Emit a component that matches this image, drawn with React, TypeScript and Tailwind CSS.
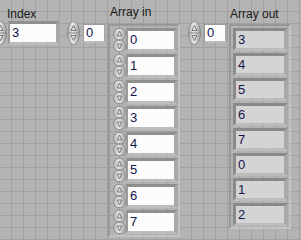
import React from 'react';

const arrayIn = [0, 1, 2, 3, 4, 5, 6, 7];
const arrayOut = [3, 4, 5, 6, 7, 0, 1, 2];

// oval up/down spinner used by the index displays and the Index control
const OvalSpinner: React.FC = () => (
  <svg width="13" height="24" viewBox="0 0 13 24" className="shrink-0">
    <defs>
      <linearGradient id="ov" x1="0" x2="1" y1="0" y2="0">
        <stop offset="0" stopColor="#a9a9a9" />
        <stop offset="0.45" stopColor="#ececec" />
        <stop offset="1" stopColor="#9c9c9c" />
      </linearGradient>
    </defs>
    <ellipse cx="6.5" cy="12" rx="6" ry="11.5" fill="url(#ov)" stroke="#8a8a8a" />
    <line x1="1" y1="12" x2="12" y2="12" stroke="#8a8a8a" />
    <path d="M6.5 4.5 L9 9.5 L4 9.5 Z" fill="none" stroke="#6e6e6e" strokeWidth="0.9" />
    <path d="M6.5 19.5 L9 14.5 L4 14.5 Z" fill="none" stroke="#6e6e6e" strokeWidth="0.9" />
  </svg>
);

// two stacked buttons on each array element
const PairSpinner: React.FC = () => (
  <svg width="13" height="24" viewBox="0 0 13 24" className="shrink-0">
    <defs>
      <linearGradient id="pb" x1="0" x2="1" y1="0" y2="0">
        <stop offset="0" stopColor="#b0b0b0" />
        <stop offset="0.45" stopColor="#e6e6e6" />
        <stop offset="1" stopColor="#a2a2a2" />
      </linearGradient>
    </defs>
    <rect x="0.5" y="0.5" width="12" height="11" rx="5" fill="url(#pb)" stroke="#8e8e8e" />
    <rect x="0.5" y="12.5" width="12" height="11" rx="5" fill="url(#pb)" stroke="#8e8e8e" />
    <path d="M6.5 3 L8.8 8 L4.2 8 Z" fill="none" stroke="#6e6e6e" strokeWidth="0.9" />
    <path d="M6.5 21 L8.8 16 L4.2 16 Z" fill="none" stroke="#6e6e6e" strokeWidth="0.9" />
  </svg>
);

const IndexDisplay: React.FC = () => (
  <div className="flex items-center gap-[3px] pt-[21px]">
    <OvalSpinner />
    <div className="w-[23px] h-[19px] bg-[#fcfcfc] border-t border-l border-[#9a9a9a] border-r-2 border-b-2 border-r-[#a9a9a9] border-b-[#bdbdbd] pl-[2px] text-[13px] leading-[16px] text-[#14144a]">
      0
    </div>
  </div>
);

export default function App() {
  return (
    <div className="w-[301px] h-[240px] overflow-hidden bg-[#b3b3b3] bg-[linear-gradient(to_right,#a1a1a1_1px,transparent_1px),linear-gradient(to_bottom,#a1a1a1_1px,transparent_1px)] bg-[size:12px_12px] bg-[position:-1px_-1px] font-['Liberation_Sans',Arial,sans-serif]">
      <div className="flex items-start">
        {/* Index control */}
        <div className="ml-[-6px] w-[66px] shrink-0">
          <div className="pl-[13px] pt-[7px] h-[21px] text-[12px] leading-[14px] text-[#1a1a1a]">Index</div>
          <div className="flex items-center">
            <OvalSpinner />
            <div className="ml-[1px] w-[52px] h-[24px] bg-[#fcfcfc] border-t-[3px] border-l-2 border-r-4 border-b-[3px] border-t-[#8f8f8f] border-l-[#9a9a9a] border-r-[#a8a8a8] border-b-[#bcbcbc] pl-[2px] text-[13px] leading-[18px] text-[#14144a]">
              3
            </div>
          </div>
        </div>

        {/* Array in index display */}
        <div className="ml-[7px] w-[40px] shrink-0">
          <IndexDisplay />
        </div>

        {/* Array in */}
        <div className="ml-[1px] w-[72px] shrink-0">
          <div className="pl-[2px] pt-[5px] h-[24px] text-[12px] leading-[14px] text-[#1a1a1a]">Array in</div>
          <div className="border-2 border-t-[#989898] border-l-[#989898] border-r-[#c2c2c2] border-b-[#c2c2c2] pt-[2px] pl-[3px] pb-[1px] flex flex-col gap-[2px]">
            {arrayIn.map(v => (
              <div key={v} className="flex items-center">
                <PairSpinner />
                <div className="w-[52px] h-[24px] bg-[#fcfcfc] border-t-[3px] border-l-2 border-r-4 border-b-[3px] border-t-[#8f8f8f] border-l-[#9a9a9a] border-r-[#a8a8a8] border-b-[#bcbcbc] pl-[2px] text-[13px] leading-[18px] text-[#14144a]">
                  {v}
                </div>
              </div>
            ))}
          </div>
        </div>

        {/* Array out index display */}
        <div className="ml-[8px] w-[40px] shrink-0">
          <IndexDisplay />
        </div>

        {/* Array out */}
        <div className="ml-[1px] w-[62px] shrink-0">
          <div className="pl-[1px] pt-[7px] h-[24px] text-[12px] leading-[14px] text-[#1a1a1a]">Array out</div>
          <div className="border-2 border-t-[#989898] border-l-[#989898] border-r-[#c2c2c2] border-b-[#c2c2c2] pt-[2px] pl-[2px] pr-[1px] pb-[1px] flex flex-col gap-[2px]">
            {arrayOut.map((v, i) => (
              <div key={i} className="w-[55px] h-[23px] bg-[#d4d4d4] border-t-[3px] border-l-[3px] border-r-4 border-b-[3px] border-t-[#8a8a8a] border-l-[#8a8a8a] border-r-[#a8a8a8] border-b-[#bcbcbc] pl-[2px] text-[13px] leading-[17px] text-[#14144a]">
                {v}
              </div>
            ))}
          </div>
        </div>
      </div>
    </div>
  );
}
